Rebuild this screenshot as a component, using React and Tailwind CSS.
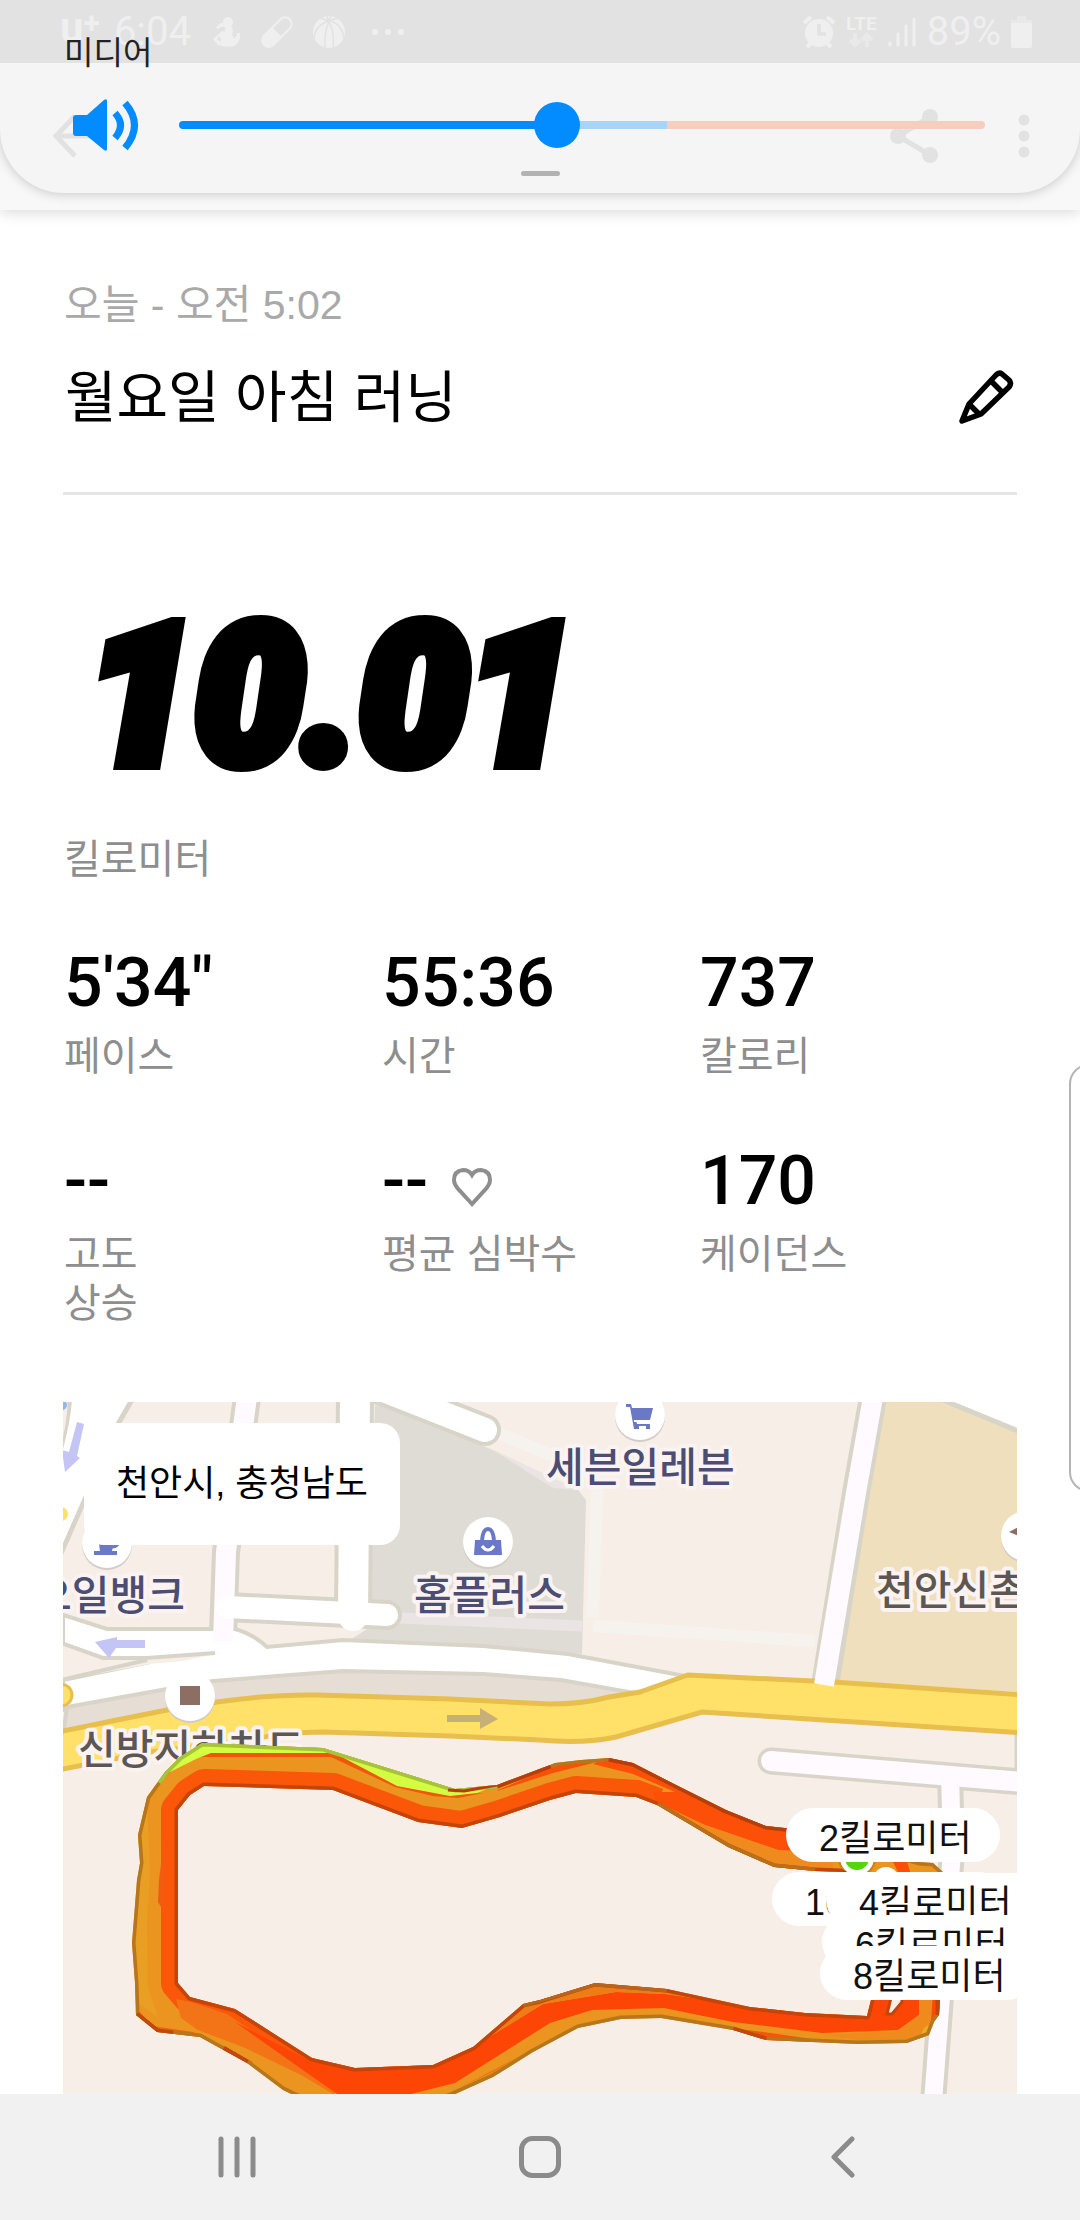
import React from "react";

const STATS = [
  { value: `5'34"`, label: ["페이스"] },
  { value: "55:36", label: ["시간"] },
  { value: "737", label: ["칼로리"] },
  { value: "--", label: ["고도", "상승"] },
  { value: "--", label: ["평균 심박수"], heart: true },
  { value: "170", label: ["케이던스"] },
];

const MAP_W = 954;
const MAP_H = 692;

const PINS = [
  { text: "2킬로미터", x: 723, y: 406 },
  { text: "10킬로미터", x: 709, y: 470 },
  { text: "4킬로미터", x: 763, y: 471 },
  { text: "6킬로미터", x: 759, y: 513 },
  { text: "8킬로미터", x: 757, y: 544 },
];

const OUTER =
  "M139 341L260 346L392 387L434 383L487 363L492 361L518 358L546 356L570 361L615 384L663 408L703 424L740 428L856 460L870 461L880 470L882 560L877 598L876 613L871 620L866 633L844 641L794 642L703 638L670 628L598 616L558 617L515 626L470 650L430 675L390 693L340 712L270 712L220 688L184 661L137 635L94 630L73 613L72 581L69 541L74 478L77 461L75 433L84 395L102 370L117 355Z";
const INNER =
  "M141 384L270 388L355 420L399 426L437 415L487 398L513 391L573 395L594 403L665 445L711 465L752 469L777 470L826 500L808 598L804 614L742 611L687 605L604 587L532 581L477 598L460 602L410 645L370 663L292 666L249 656L172 607L127 595L115 581L115 408L127 393Z";

function StatusBar() {
  return (
    <div className="flex h-[63px] items-center justify-between bg-[#e2e2e2] pr-[48px] pl-[60px] text-[#efefef]">
      <div className="flex items-center gap-[14px]">
        <span className="flex h-[48px] items-start font-['Roboto'] leading-[40px] font-bold">
          <span className="text-[42px]">u</span>
          <span className="text-[30px] leading-[30px]">+</span>
        </span>
        <span className="font-['Roboto'] text-[40px] leading-none">6:04</span>
        <div className="flex items-center gap-[20px] pl-[8px]">
          <svg width="28" height="32" viewBox="0 0 28 32" fill="currentColor">
            <circle cx="15" cy="6" r="5" />
            <path d="M3 12Q7 6 12 7L12 11Q8 10 5 13ZM12 10H18Q21 14 19 18L21 23L24 19V17H27Q28 26 21 30Q14 32 5 29L0 23L9 15L12 16ZM7 20L4 23L8 26Z" />
          </svg>
          <svg width="32" height="32" viewBox="0 0 32 32">
            <g transform="rotate(45 16 16)">
              <rect x="9.500" y="-2" width="13" height="36" rx="6.500" fill="none" stroke="currentColor" strokeWidth="2" />
              <path d="M8.500 16H23.500V27.500A7.500 7.500 0 0 1 8.500 27.500Z" fill="currentColor" />
            </g>
          </svg>
          <svg width="32" height="32" viewBox="0 0 32 32">
            <circle cx="16" cy="16" r="16" fill="currentColor" />
            <path d="M15 5Q22 14 20 32M17 4Q11 14 12 32M1 22Q2 10 15 5L25 2M31 22Q29 8 17 5L7 2M14 0L16 5L18 0" fill="none" stroke="#e2e2e2" strokeWidth="1.500" />
          </svg>
        </div>
        <svg width="34" height="8" viewBox="0 0 34 8" fill="currentColor" className="ml-[12px]">
          <circle cx="4" cy="4" r="3" />
          <circle cx="17" cy="4" r="3" />
          <circle cx="30" cy="4" r="3" />
        </svg>
      </div>
      <div className="flex items-center gap-[10px]">
        <svg width="34" height="34" viewBox="0 0 34 34">
          <circle cx="17" cy="18" r="14" fill="currentColor" />
          <path d="M2 8L9 2M32 8L25 2M5 32L9 28M29 32L25 28" stroke="currentColor" strokeWidth="4" />
          <path d="M17 9V19H24" fill="none" stroke="#e2e2e2" strokeWidth="3.500" />
        </svg>
        <div className="flex flex-col items-center">
          <span className="font-['Roboto'] text-[19px] leading-[16px] font-bold">LTE</span>
          <svg width="24" height="16" viewBox="0 0 24 16" fill="none" stroke="#e9e9e9" strokeWidth="4">
            <path d="M6 1V12M1 8L6 13L11 8M18 15V4M13 8L18 3L23 8" />
          </svg>
        </div>
        <svg width="30" height="32" viewBox="0 0 30 32" stroke="currentColor" strokeWidth="3" strokeLinecap="round">
          <path d="M3 27V29M11 18V29M19 10V29M27 3V29" />
        </svg>
        <span className="font-['Roboto'] text-[40px] leading-none">89%</span>
        <svg width="21" height="32" viewBox="0 0 21 32">
          <path d="M6 0H15V4H21V8H0V4H6Z" fill="#e9e9e9" />
          <rect y="7" width="21" height="25" rx="2" fill="currentColor" />
        </svg>
      </div>
    </div>
  );
}

function Header() {
  return (
    <header className="relative h-[210px] bg-[#f8f8f8] shadow-[0_2px_14px_rgba(0,0,0,0.16)]">
      <div className="absolute inset-x-0 top-0 h-[193px] overflow-hidden rounded-b-[64px] bg-[#f5f5f5] shadow-[0_1px_12px_rgba(0,0,0,0.2)]">
        <StatusBar />
        <div className="flex items-center justify-between pt-[46px] pr-[50px] pl-[52px] text-[#e2e2e2]">
          <button aria-label="뒤로">
            <svg width="46" height="46" viewBox="0 0 46 46" fill="none" stroke="currentColor" strokeWidth="5">
              <path d="M23 3L4 23L23 43M4 23H46" />
            </svg>
          </button>
          <div className="flex items-center gap-[80px]">
            <button aria-label="공유">
              <svg width="48" height="54" viewBox="0 0 48 54" fill="currentColor">
                <path d="M40 8L8 27L40 46" fill="none" stroke="currentColor" strokeWidth="5" />
                <circle cx="40" cy="8" r="8" />
                <circle cx="8" cy="27" r="8" />
                <circle cx="40" cy="46" r="8" />
              </svg>
            </button>
            <button aria-label="더보기">
              <svg width="12" height="44" viewBox="0 0 12 44" fill="currentColor">
                <circle cx="6" cy="6" r="5.500" />
                <circle cx="6" cy="22" r="5.500" />
                <circle cx="6" cy="38" r="5.500" />
              </svg>
            </button>
          </div>
        </div>
      </div>
      <div className="absolute inset-x-0 top-0 flex flex-col pt-[34px]">
        <label htmlFor="media-volume" className="pl-[64px] text-[32px] leading-[38px] text-[#222]">
          미디어
        </label>
        <div className="mt-[26px] flex items-center pr-[95px] pl-[72px]">
          <svg width="67" height="54" viewBox="0 0 67 54" className="shrink-0">
            <path d="M4 17H15L32 2Q35 0 35 3V51Q35 54 32 52L15 38H4Q1 38 1 35V20Q1 17 4 17Z" fill="#038cff" />
            <path d="M43 15Q54 27 43 40M53 5Q72 27 53 50" fill="none" stroke="#038cff" strokeWidth="7" />
          </svg>
          <input
            id="media-volume"
            type="range"
            min="0"
            max="15"
            defaultValue="7"
            className="ml-[40px] h-[8px] min-w-0 flex-1 appearance-none rounded-full bg-[linear-gradient(to_right,#038cff_47%,#a8d4f8_47%,#a8d4f8_60.6%,#f6cdbf_60.6%)] [&::-webkit-slider-thumb]:h-[46px] [&::-webkit-slider-thumb]:w-[46px] [&::-webkit-slider-thumb]:appearance-none [&::-webkit-slider-thumb]:rounded-full [&::-webkit-slider-thumb]:bg-[#038cff]"
          />
        </div>
        <div className="mt-[19px] h-[5px] w-[39px] self-center rounded-full bg-[#b2b2b2]" />
      </div>
    </header>
  );
}

function MapLabel({ x, y, color, children }) {
  return (
    <text
      x={x}
      y={y}
      fill={color}
      stroke="#faf3f1"
      strokeWidth="8"
      strokeLinejoin="round"
      paintOrder="stroke"
      fontSize="41"
      fontWeight="500"
      fontFamily="'Noto Sans CJK KR', sans-serif"
    >
      {children}
    </text>
  );
}

function Poi({ x, y, children }) {
  return (
    <g transform={`translate(${x} ${y})`}>
      <circle cy="2" r="25" fill="#d3cbc6" />
      <circle r="25" fill="#fff" />
      {children}
    </g>
  );
}

function MapDrawing() {
  return (
    <svg viewBox={`0 0 ${MAP_W} ${MAP_H}`} className="block w-full" role="img" aria-label="러닝 경로 지도">
      <defs>
        <clipPath id="ring">
          <path d={OUTER + INNER} clipRule="evenodd" />
        </clipPath>
      </defs>
      <rect width={MAP_W} height={MAP_H} fill="#f7eee8" />

      {/* city blocks */}
      <path d="M312 0L430 48L477 70L515 88L523 98L519 252L420 246L284 240L307 225Z" fill="#dfdcd6" />
      <path d="M432 30L520 66Q534 74 534 90L530 215M530 224L752 239" fill="none" stroke="#f6f3ee" strokeWidth="12" />
      <path d="M335 216L519 224" stroke="#ebe4e4" strokeWidth="11" />
      <path d="M430 48L477 70L515 88L490 86Z" fill="#ebe4e4" />
      <path d="M818 0H883L954 28V290L771 278Z" fill="#efdfbd" />
      <path d="M875 -4L960 31V-4Z" fill="#fff" stroke="#d8d4c8" strokeWidth="5" />

      {/* side streets */}
      <g fill="none" stroke="#d8d4c8">
        <path d="M810 -5L793 91L761 290" strokeWidth="28" />
        <path d="M184 -5L163 150L160 232" strokeWidth="28" />
        <path d="M292 -5L290 212" strokeWidth="38" />
        <path d="M164 205L324 213" strokeWidth="30" strokeLinecap="round" />
        <path d="M300 -20L422 28" strokeWidth="32" strokeLinecap="round" />
        <path d="M887 370L889 450L870 700" strokeWidth="26" />
        <path d="M708 359L960 380" strokeWidth="27" strokeLinecap="round" />
        <path d="M953 330V368" strokeWidth="3" />
        <path d="M7 -4Q8 20 -4 60M70 -4L54 24L20 101L-4 156" strokeWidth="5" />
      </g>
      <path d="M9 -4L67 -4L52 22L18 100L-4 150V62Q8 20 9 -4Z" fill="#fff" />

      {/* avenues */}
      <path d="M0 213L44 227H172Q190 232 204 245L280 238L420 244L505 252L622 274L577 293L498 279L420 273L280 270L150 280L104 288L0 308V278L87 260H40L0 242Z" fill="#fff" stroke="#d8d4c8" strokeWidth="4" />
      <path d="M40 256L87 258L157 251L120 259L87 262L0 278V242Z" fill="#f7eee8" />
      <path d="M-2 241L40 256H84L152 251M84 258L-2 278" fill="none" stroke="#d8d4c8" strokeWidth="4" />
      <path d="M4 305L104 287L150 279L280 269L420 272L498 278L577 292L500 310L254 298L0 334Z" fill="#e6ddd5" stroke="#d8d4c8" strokeWidth="4" />
      <g fill="none">
        <path d="M184 -5L163 150L160 240" stroke="#fefaff" strokeWidth="20" />
        <path d="M292 -5L290 214" stroke="#fff" strokeWidth="30" strokeLinecap="round" />
        <path d="M164 205L324 213" stroke="#fff" strokeWidth="22" strokeLinecap="round" />
        <path d="M300 -20L422 28" stroke="#fff" strokeWidth="24" strokeLinecap="round" />
        <path d="M708 359L960 380" stroke="#fefaff" strokeWidth="20" strokeLinecap="round" />
        <path d="M887 370L889 450L870 700" stroke="#fefaff" strokeWidth="18" />
      </g>
      <path
        d="M-5 330L54 318L104 308L154 300Q210 292 254 293L387 297L487 302Q520 302 546 295L577 290L625 273L770 280L960 293V331L639 310L553 335Q520 342 477 338L387 334L260 330Q220 330 187 338L87 350L-5 368Z"
        fill="#ffe16a"
        stroke="#e8be4c"
        strokeWidth="5"
      />
      <path d="M579 292L624 276L640 278L600 300Z" fill="#ffe16a" />
      <path d="M810 -5L793 91L761 283" fill="none" stroke="#fefaff" strokeWidth="20" />
      <circle cx="-2" cy="293" r="11" fill="#ffe16a" stroke="#e8be4c" strokeWidth="3" />
      <circle cx="-2" cy="112" r="7" fill="#ffe16a" />
      <circle cx="-1" cy="3" r="5" fill="#8fb8f2" />

      {/* direction arrows */}
      <g fill="#c5c5f5">
        <path d="M14 20L21 22L14 54L17 56L2 70L-1 48L6 50Z" />
        <path d="M82 238V246H53L46 256L32 240L54 235V238Z" />
      </g>
      <path d="M384 313H417V306L435 317L417 327V320H384Z" fill="#c6b078" />

      {/* places */}
      <Poi x={577} y={13}>
        <path d="M-14 -11H-9L-8 -7H13L10 5H-4L-3 9H10V14H6V11H-1V14H-6L-10 -8H-14Z" fill="#6b78c5" />
        <path d="M-6 6H10" stroke="#fff" strokeWidth="2" />
      </Poi>
      <Poi x={425} y={140}>
        <path d="M-13 -2H13L14 13H-14Z" fill="#6b78c5" />
        <path d="M-6 -2Q-5 -13 0 -13Q5 -13 6 -2" fill="none" stroke="#6b78c5" strokeWidth="4" />
        <path d="M-6 4Q0 12 6 4" fill="none" stroke="#fff" strokeWidth="3" />
      </Poi>
      <Poi x={44} y={141}>
        <path d="M-9 -6H8L5 8H10V12H-13V8H-7Z" fill="#6b78c5" />
        <path d="M5 4Q12 4 12 -4" fill="none" stroke="#6b78c5" strokeWidth="3" />
      </Poi>
      <Poi x={963} y={134}>
        <path d="M-17 -4L0 -13L17 -4L0 3Z" fill="#8d6e63" />
      </Poi>
      <Poi x={127} y={294}>
        <rect x="-10" y="-10" width="20" height="19" fill="#8d6e63" />
      </Poi>
      <MapLabel x={483} y={80} color="#4b4e72">세븐일레븐</MapLabel>
      <MapLabel x={351} y={208} color="#4b4e72">홈플러스</MapLabel>
      <MapLabel x={-29} y={208} color="#4b4e72">오일뱅크</MapLabel>
      <MapLabel x={813} y={203} color="#5c5753">천안신촌초</MapLabel>
      <MapLabel x={15} y={362} color="#5c5753">신방지하차도</MapLabel>

      {/* running route */}
      <g clipPath="url(#ring)" strokeLinejoin="round">
        <rect width={MAP_W} height={MAP_H} fill="#eb941f" />
        <path d="M84 395L75 433L77 470L70 541L73 600L95 615L85 585L84 520L87 470Z" fill="#e99e24" />
        <path
          d="M594 403L573 395L513 391L487 398L437 415L399 426L355 420L270 388L141 384L127 393L115 408V581L127 595L172 607L249 656L292 666L370 663L410 645"
          fill="none"
          stroke="#fb5708"
          strokeWidth="34"
        />
        <path d="M96 478L102 430L101 510L95 500Z" fill="#f35c10" />
        <path d="M546 354L570 358L615 382L663 406L703 422L780 426L790 456L715 448L642 423L594 403L590 390L612 390L570 372L530 362Z" fill="#fc4f08" />
        <path d="M600 403L642 423L715 448L770 450V472L711 468L665 448Z" fill="#ef8a1e" />
        <path d="M113 597L128 600L164 612L205 640L252 664L300 680L270 692L240 674L180 645L135 628L118 616Z" fill="#f37416" />
        <path d="M73 606L90 624L130 630L190 660L180 664L137 640L90 634L70 615Z" fill="#f26312" />
        <path d="M172 620L249 660L292 666L370 663L410 645L480 602L553 590L603 592L687 605L742 609L804 612L809 590H860L856 613L835 628L759 631L670 620L601 606L529 608L487 621L392 681L340 694H277L244 671Z" fill="#fd4606" />
        <path d="M460 602L532 581L604 587L640 596L600 592L553 590L480 602L410 645Z" fill="#ee7d18" />
        <path d="M703 640L660 625L700 630L770 640Z" fill="#f4540c" />
        <path d="M759 633L835 629L856 613V590H870L868 620L862 636L844 640L794 638Z" fill="#ef8b1d" />
        <path d="M870 590H884L878 612L868 620Z" fill="#fb4b08" />
        <path d="M861 626L871 620L866 633L856 636Z" fill="#e8ad25" />
        <path d="M398 685L455 655L430 670Z" fill="#f4710f" />
        <path d="M820 440L842 452L850 480H840Z" fill="#fb4f08" />
        <path d="M435 388L487 366L518 358L530 361L490 371L434 389Z" fill="#fb4f08" />
        <path d={OUTER} fill="none" stroke="#b5761c" strokeWidth="7" />
        <path d={INNER} fill="none" stroke="#c44409" strokeWidth="7" />
        <path d="M434 383L487 363M546 356L570 361L615 384L663 408L703 424L740 428" fill="none" stroke="#b93c0a" strokeWidth="7" />
        <path d="M594 403L665 445L711 465L752 469" fill="none" stroke="#b8701a" strokeWidth="7" />
        <path d="M460 602L532 581L604 587" fill="none" stroke="#b8641a" strokeWidth="7" />
        <path d="M703 638L670 628M876 598V613M184 661L160 647M110 632L94 630L73 613" fill="none" stroke="#c0480c" strokeWidth="7" />
        <path d="M138 353L148 348L267 350L277 352L334 381L387 392L420 391L395 396L370 394L332 385L268 355L134 355Z" fill="#f2560d" />
        <path d="M102 370L117 355L139 341L260 346L392 387L434 383L414 391L387 394L334 384L277 354L267 351L148 351L133 357L107 370Z" fill="#d4fd42" />
        <path d="M95 380L102 370L117 355L139 341L260 346L392 387L434 383" fill="none" stroke="#a6c43a" strokeWidth="7" />
        <path d="M385 388L401 389L434 383" fill="none" stroke="#b93c0a" strokeWidth="3" />
      </g>
      <path d="M828 596L824 612H829L839 600V596Z" fill="#f7eee8" stroke="#c44409" strokeWidth="3" />
      <circle cx="794" cy="456" r="19" fill="#00000022" />
      <circle cx="794" cy="456" r="17" fill="#fff" />
      <circle cx="794" cy="456" r="12" fill="#55d40f" />
      <circle cx="823" cy="478" r="13" fill="#fff" />
    </svg>
  );
}

function RouteMap() {
  return (
    <section className="relative mt-[74px] flex-1 overflow-hidden">
      <div className="relative">
        <MapDrawing />
        {PINS.map((pin) => (
          <span
            key={pin.text}
            className="absolute flex h-[54px] items-center rounded-full bg-white pt-[8px] pr-[28px] pl-[33px] text-[36px] leading-none whitespace-nowrap text-[#111]"
            style={{ left: `${(pin.x / MAP_W) * 100}%`, top: `${(pin.y / MAP_H) * 100}%` }}
          >
            {pin.text}
          </span>
        ))}
      </div>
      <span className="absolute top-[21px] left-[21px] flex h-[122px] items-center rounded-[20px] bg-white px-[32px] text-[36px] leading-none whitespace-nowrap text-black">
        천안시, 충청남도
      </span>
    </section>
  );
}

export default function App() {
  return (
    <div className="relative flex min-h-screen flex-col overflow-hidden bg-white font-['Liberation_Sans','Noto_Sans_CJK_KR',sans-serif]">
      <Header />
      <main className="flex flex-1 flex-col px-[63px] pt-[71px]">
        <p className="pl-px text-[41px] leading-[48px] text-[#a9a9a9]">오늘 - 오전 5:02</p>
        <div className="mt-[37px] flex items-center justify-between border-b-[3px] border-[#e5e5e5] pb-[62px]">
          <h1 className="pl-[2px] text-[56px] leading-[64px] text-black">월요일 아침 러닝</h1>
          <button aria-label="제목 수정" className="mr-[2px]">
            <svg width="56" height="56" viewBox="0 0 56 56" fill="none" stroke="#000" strokeWidth="5.500" strokeLinejoin="round" strokeLinecap="round">
              <path d="M3 51L10 34L37 5Q40 2 43 4L50 10Q53 13 50 17L22 44Z" />
              <path d="M32 11L43 22M11 35L20 44" />
            </svg>
          </button>
        </div>
        <div className="mt-[122px] pl-[24px] font-['Roboto'] text-[192px] leading-[160px] font-black text-black italic [-webkit-text-stroke:16px_black]">
          10.01
        </div>
        <p className="mt-[58px] pl-px text-[40px] leading-[48px] text-[#8e8e8e]">킬로미터</p>
        <dl className="mt-[60px] grid grid-cols-3 gap-y-[60px]">
          {STATS.map((s) => (
            <div key={s.label[0]} className="flex flex-col-reverse justify-end gap-[9px] pl-px">
              <dt className="text-[40px] leading-[49px] text-[#8e8e8e]">
                {s.label.map((line) => (
                  <span key={line} className="block">
                    {line}
                  </span>
                ))}
              </dt>
              <dd className="flex items-center gap-[24px] font-['Roboto'] text-[68px] leading-[80px] font-medium text-black">
                {s.value}
                {s.heart && (
                  <svg width="40" height="40" viewBox="0 0 40 40" fill="none" stroke="#8e8e8e" strokeWidth="4" className="mt-[14px]">
                    <path d="M20 36L8 23Q2 17 2 12Q2 3 11 2Q17 2 20 7Q23 2 29 2Q38 3 38 12Q38 17 32 23Z" />
                  </svg>
                )}
              </dd>
            </div>
          ))}
        </dl>
        <RouteMap />
      </main>
      <nav className="grid h-[126px] shrink-0 grid-cols-3 place-items-center bg-[#f1f1f1] px-[86px] text-[#8b8b8b]">
        <button aria-label="최근 앱">
          <svg width="40" height="42" viewBox="0 0 40 42" stroke="currentColor" strokeWidth="5" strokeLinecap="round">
            <path d="M4 3V39M20 3V39M36 3V39" />
          </svg>
        </button>
        <button aria-label="홈">
          <svg width="42" height="42" viewBox="0 0 42 42" fill="none" stroke="currentColor" strokeWidth="5">
            <rect x="2.500" y="2.500" width="37" height="37" rx="11" />
          </svg>
        </button>
        <button aria-label="뒤로 가기">
          <svg width="24" height="42" viewBox="0 0 24 42" fill="none" stroke="currentColor" strokeWidth="5" strokeLinecap="round" strokeLinejoin="round">
            <path d="M21 3L3 21L21 39" />
          </svg>
        </button>
      </nav>
      <div className="absolute top-[1064px] -right-[13px] h-[428px] w-[24px] rounded-l-[20px] border-2 border-[#b4b4b4] bg-white" />
    </div>
  );
}
